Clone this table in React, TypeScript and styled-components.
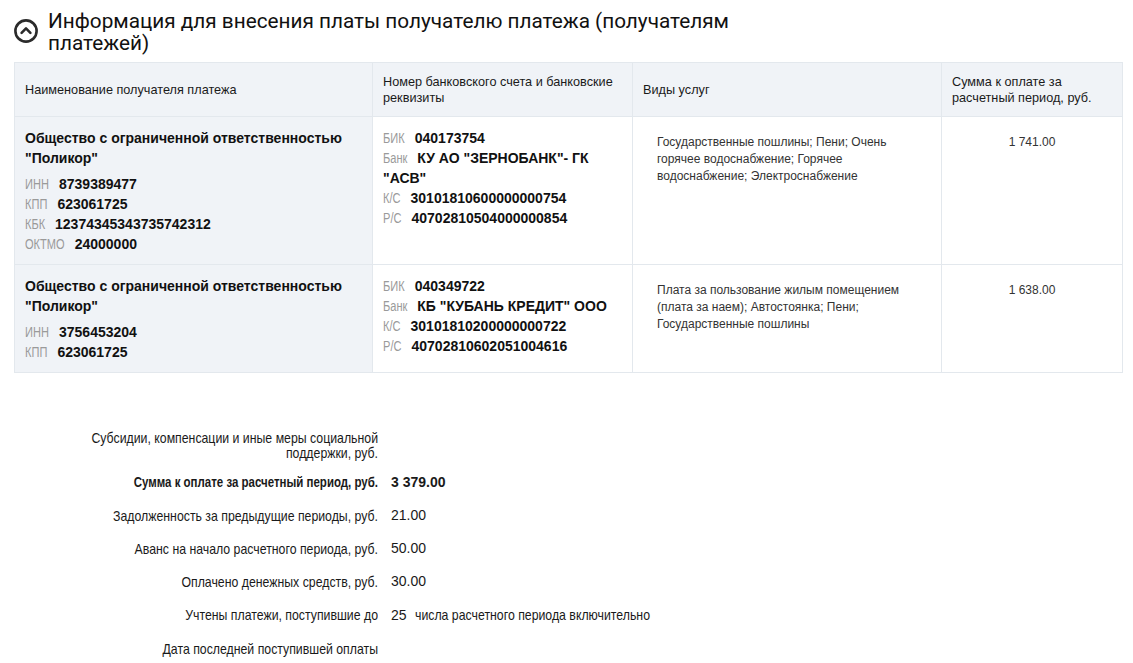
import React, { useLayoutEffect, useRef, useState } from "react";
import styled, { createGlobalStyle } from "styled-components";

const Global = createGlobalStyle`
  html, body { margin: 0; padding: 0; background: #ffffff; }
  body { font-family: "Liberation Sans", Arial, sans-serif; color: #1a1a1a; }
  * { box-sizing: border-box; }
`;

const NARROW = 0.82;
const KEY_NARROW = 0.79;

const Page = styled.div`
  width: 1133px;
  padding: 8px 11px 0 14px;
`;

const TitleRow = styled.div`
  display: flex;
  align-items: center;
  gap: 10px;
`;

const Title = styled.h2`
  margin: 0;
  max-width: 700px;
  font-family: Roboto, "Liberation Sans", sans-serif;
  font-weight: 400;
  font-size: 20.75px;
  line-height: 22px;
  color: #111;
  padding-top: 2px;
`;

const Table = styled.table`
  margin-top: 8px;
  width: 1108px;
  border-collapse: collapse;
  table-layout: fixed;
  border: 1px solid #e3e8ed;
`;

const HeadCell = styled.th<{ $w: number }>`
  width: ${(p) => p.$w}px;
  height: 54px;
  padding: 0 10px;
  background: #f0f3f7;
  border: 1px solid #e3e8ed;
  text-align: left;
  vertical-align: middle;
  font-size: 12.7px;
  line-height: 16px;
  font-weight: 400;
  color: #1a1a1a;
`;

const Cell = styled.td<{ $shade?: boolean; $pl?: number; $pt?: number; $center?: boolean }>`
  padding: ${(p) => p.$pt ?? 11}px 10px 10px ${(p) => p.$pl ?? 10}px;
  background: ${(p) => (p.$shade ? "#f0f3f7" : "#ffffff")};
  border: 1px solid #e3e8ed;
  vertical-align: top;
  text-align: ${(p) => (p.$center ? "center" : "left")};
`;

const OrgName = styled.div`
  font-size: 14px;
  line-height: 20px;
  font-weight: 700;
  color: #111;
  margin-bottom: 6px;
`;

const Line = styled.div`
  font-size: 14px;
  line-height: 20px;
`;

const KeyText = styled.span`
  display: inline-block;
  font-size: 14px;
  line-height: 14px;
  color: #9a9a9a;
  font-weight: 400;
  transform: scaleX(${KEY_NARROW});
  transform-origin: left center;
`;

const Val = styled.span`
  color: #111;
  font-weight: 700;
`;

const Services = styled.div`
  font-size: 12px;
  line-height: 17px;
  color: #333;
`;

const Amount = styled.div`
  font-size: 12px;
  line-height: 17px;
  color: #333;
`;

const Summary = styled.div`
  margin-top: 57px;
  display: flex;
  flex-direction: column;
`;

const SumRow = styled.div<{ $mb?: number }>`
  display: flex;
  align-items: flex-start;
  gap: 13px;
  margin-bottom: ${(p) => p.$mb ?? 18}px;
`;

const SumLabel = styled.div<{ $bold?: boolean }>`
  flex: 0 0 364px;
  width: 364px;
  text-align: right;
  font-size: ${(p) => (p.$bold ? 14 : 15)}px;
  line-height: 15px;
  font-weight: ${(p) => (p.$bold ? 700 : 400)};
  color: #1a1a1a;
  transform: scaleX(${NARROW});
  transform-origin: right center;
`;

const SumValue = styled.div<{ $bold?: boolean }>`
  font-size: 14px;
  line-height: 15px;
  font-weight: ${(p) => (p.$bold ? 700 : 400)};
  color: #1a1a1a;
  white-space: nowrap;
`;

const SumText = styled.span`
  display: inline-block;
  margin-left: 8px;
  font-size: 15px;
  line-height: 1;
  transform: scaleX(${NARROW});
  transform-origin: left center;
`;

/* A condensed grey key label; the negative margin cancels the space the
   horizontal squeeze leaves behind, measured at run time. */
const Key = ({ children }: { children: React.ReactNode }) => {
  const ref = useRef<HTMLSpanElement>(null);
  const [mr, setMr] = useState(6);
  useLayoutEffect(() => {
    if (ref.current) setMr(10 - ref.current.offsetWidth * (1 - KEY_NARROW));
  }, []);
  return (
    <KeyText ref={ref} style={{ marginRight: mr }}>
      {children}
    </KeyText>
  );
};

const CollapseIcon = () => (
  <svg width="24" height="24" viewBox="0 0 24 24" aria-hidden>
    <circle cx="12" cy="12" r="10.6" fill="none" stroke="#2b2b2b" strokeWidth="2.6" />
    <path d="M7.6 13.8 L12 9.4 L16.4 13.8" fill="none" stroke="#2b2b2b" strokeWidth="2.6" strokeLinecap="round" strokeLinejoin="round" />
  </svg>
);

type Recipient = {
  name: string;
  ids: [string, string][];
  bank: [string, string][];
  services: string;
  amount: string;
};

const recipients: Recipient[] = [
  {
    name: 'Общество с ограниченной ответственностью "Поликор"',
    ids: [
      ["ИНН", "8739389477"],
      ["КПП", "623061725"],
      ["КБК", "12374345343735742312"],
      ["ОКТМО", "24000000"],
    ],
    bank: [
      ["БИК", "040173754"],
      ["Банк", 'КУ АО "ЗЕРНОБАНК"- ГК "АСВ"'],
      ["К/С", "30101810600000000754"],
      ["Р/С", "40702810504000000854"],
    ],
    services: "Государственные пошлины; Пени; Очень горячее водоснабжение; Горячее водоснабжение; Электроснабжение",
    amount: "1 741.00",
  },
  {
    name: 'Общество с ограниченной ответственностью "Поликор"',
    ids: [
      ["ИНН", "3756453204"],
      ["КПП", "623061725"],
    ],
    bank: [
      ["БИК", "040349722"],
      ["Банк", 'КБ "КУБАНЬ КРЕДИТ" ООО'],
      ["К/С", "30101810200000000722"],
      ["Р/С", "40702810602051004616"],
    ],
    services: "Плата за пользование жилым помещением (плата за наем); Автостоянка; Пени; Государственные пошлины",
    amount: "1 638.00",
  },
];

const summary: { label: string; value?: string; bold?: boolean; extra?: string; mb?: number }[] = [
  { label: "Субсидии, компенсации и иные меры социальной поддержки, руб.", mb: 15 },
  { label: "Сумма к оплате за расчетный период, руб.", value: "3 379.00", bold: true },
  { label: "Задолженность за предыдущие периоды, руб.", value: "21.00" },
  { label: "Аванс на начало расчетного периода, руб.", value: "50.00" },
  { label: "Оплачено денежных средств, руб.", value: "30.00" },
  { label: "Учтены платежи, поступившие до", value: "25", extra: "числа расчетного периода включительно" },
  { label: "Дата последней поступившей оплаты" },
];

export default function App() {
  return (
    <>
      <Global />
      <Page>
        <TitleRow>
          <CollapseIcon />
          <Title>Информация для внесения платы получателю платежа (получателям платежей)</Title>
        </TitleRow>
        <Table>
          <thead>
            <tr>
              <HeadCell $w={358}>Наименование получателя платежа</HeadCell>
              <HeadCell $w={260}>Номер банковского счета и банковские реквизиты</HeadCell>
              <HeadCell $w={309}>Виды услуг</HeadCell>
              <HeadCell $w={181}>Сумма к оплате за расчетный период, руб.</HeadCell>
            </tr>
          </thead>
          <tbody>
            {recipients.map((r, i) => (
              <tr key={i}>
                <Cell $shade>
                  <OrgName>{r.name}</OrgName>
                  {r.ids.map(([k, v]) => (
                    <Line key={k}>
                      <Key>{k}</Key>
                      <Val>{v}</Val>
                    </Line>
                  ))}
                </Cell>
                <Cell>
                  {r.bank.map(([k, v]) => (
                    <Line key={k}>
                      <Key>{k}</Key>
                      <Val>{v}</Val>
                    </Line>
                  ))}
                </Cell>
                <Cell $pl={24} $pt={17}>
                  <Services>{r.services}</Services>
                </Cell>
                <Cell $center $pt={17}>
                  <Amount>{r.amount}</Amount>
                </Cell>
              </tr>
            ))}
          </tbody>
        </Table>
        <Summary>
          {summary.map((s, i) => (
            <SumRow key={i} $mb={s.mb}>
              <SumLabel $bold={s.bold}>{s.label}</SumLabel>
              {s.value && (
                <SumValue $bold={s.bold}>
                  {s.value}
                  {s.extra && <SumText>{s.extra}</SumText>}
                </SumValue>
              )}
            </SumRow>
          ))}
        </Summary>
      </Page>
    </>
  );
}
